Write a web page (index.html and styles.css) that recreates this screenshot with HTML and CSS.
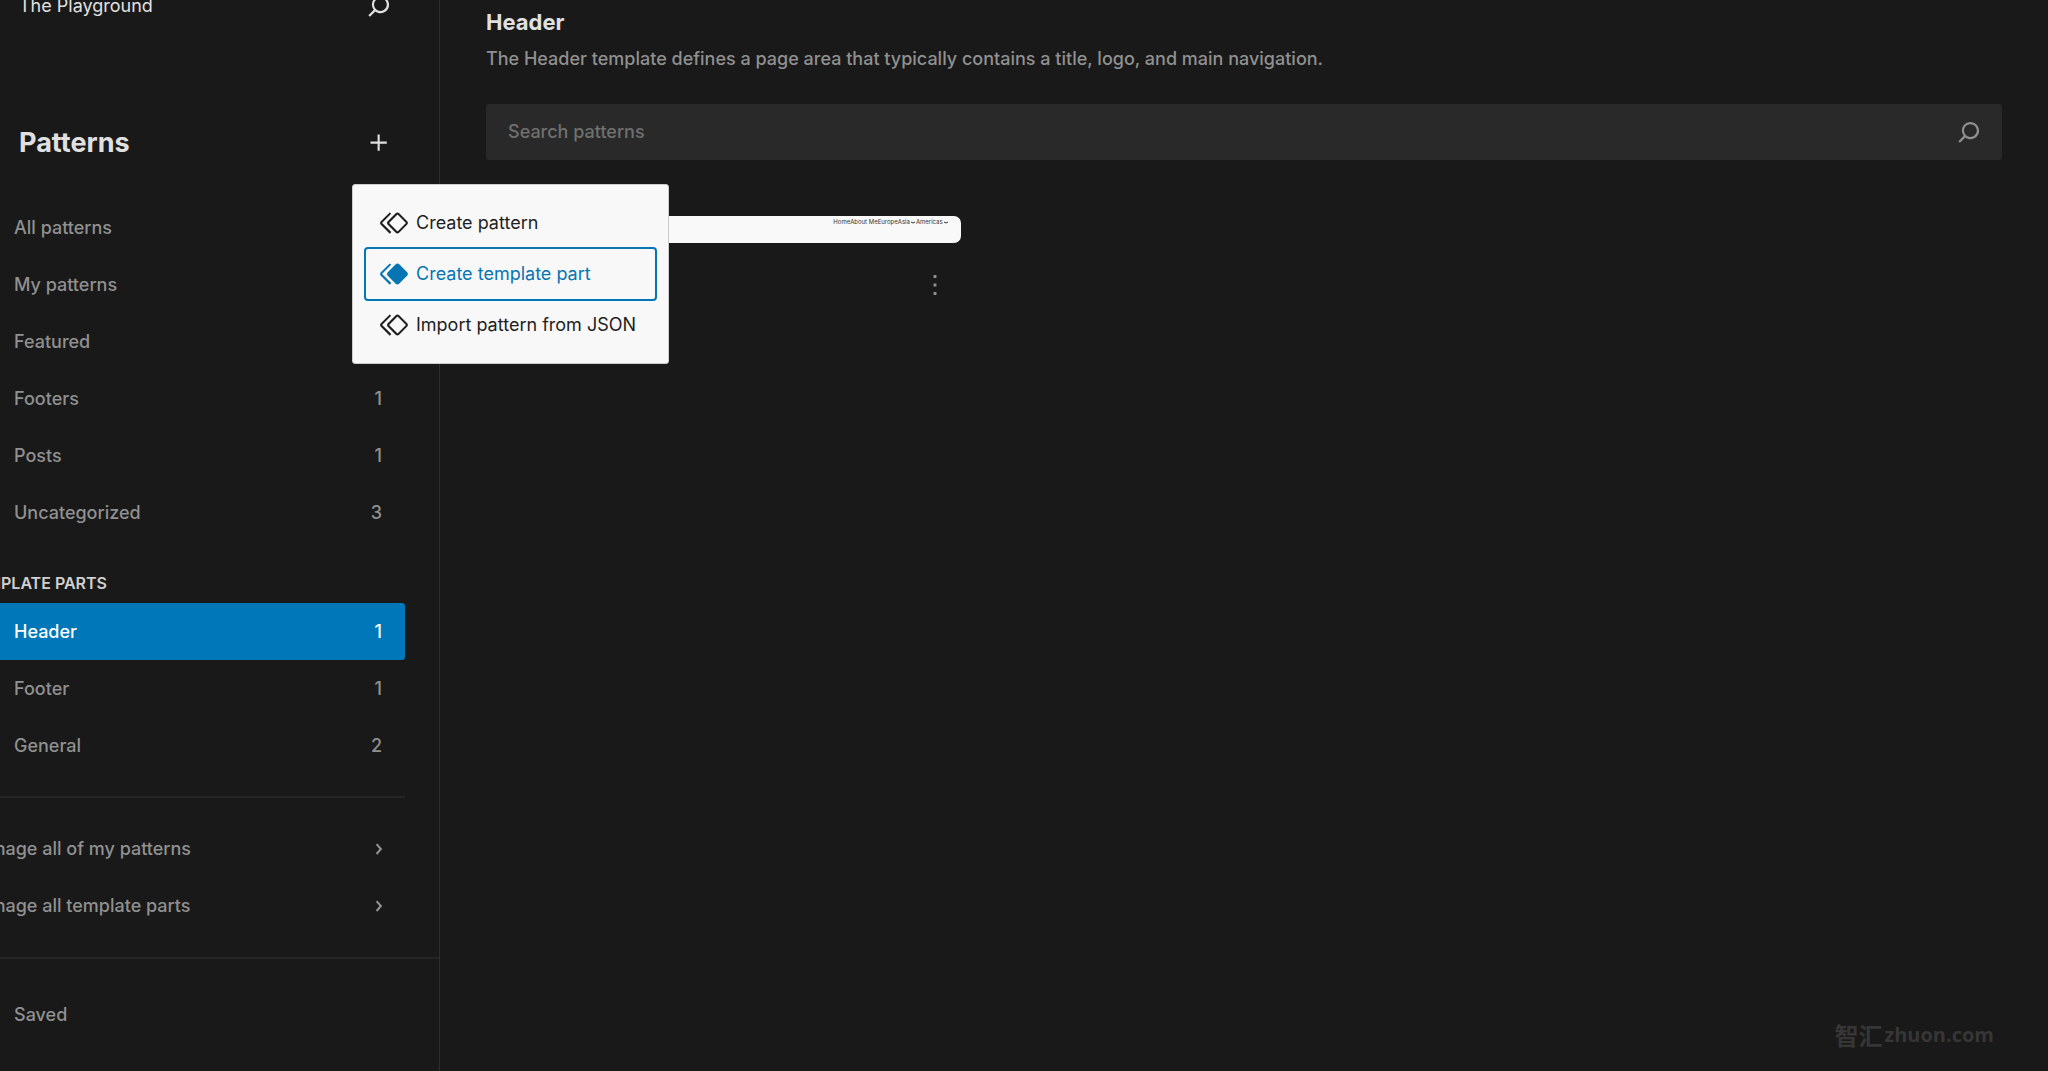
FILE: index.html
```html
<!DOCTYPE html>
<html lang="en">
<head>
<meta charset="utf-8">
<title>Patterns</title>
<link rel="stylesheet" href="styles.css">
</head>
<body>
<svg class="sprite" aria-hidden="true">
  <symbol id="search" viewBox="0 0 24 24"><path d="M13 5c-3.3 0-6 2.7-6 6 0 1.4.5 2.7 1.3 3.7l-3.8 3.8 1.1 1.1 3.8-3.8c1 .8 2.3 1.3 3.7 1.3 3.3 0 6-2.7 6-6S16.3 5 13 5zm0 10.5c-2.5 0-4.5-2-4.5-4.5s2-4.5 4.5-4.5 4.5 2 4.5 4.5-2 4.5-4.5 4.5z"/></symbol>
  <symbol id="plus" viewBox="0 0 24 24"><path d="M11 12.5V17.5H12.5V12.5H17.5V11H12.5V6H11V11H6V12.5H11Z"/></symbol>
  <symbol id="pattern" viewBox="0 0 24 24"><path d="M21.3 10.8l-5.6-5.6c-.7-.7-1.8-.7-2.5 0l-5.6 5.6c-.7.7-.7 1.8 0 2.5l5.6 5.6c.3.3.8.5 1.2.5s.9-.2 1.2-.5l5.6-5.6c.8-.7.8-1.9.1-2.5zm-1 1.4l-5.6 5.6c-.1.1-.3.1-.4 0l-5.6-5.6c-.1-.1-.1-.3 0-.4l5.6-5.6s.1-.1.2-.1.1 0 .2.1l5.6 5.6c.1.1.1.3 0 .4zm-16.6-.4L10 5.5l-1-1-6.3 6.3c-.7.7-.7 1.8 0 2.5L9 19.5l1.1-1.1-6.3-6.3c-.2 0-.2-.2-.1-.3z"/></symbol>
  <symbol id="part" viewBox="0 0 24 24"><path d="M21.3 10.8l-5.6-5.6c-.7-.7-1.8-.7-2.5 0l-5.6 5.6c-.7.7-.7 1.8 0 2.5l5.6 5.6c.3.3.8.5 1.2.5s.9-.2 1.2-.5l5.6-5.6c.8-.7.8-1.9.1-2.5zm-17.6 1L10 5.5l-1-1-6.3 6.3c-.7.7-.7 1.8 0 2.5L9 19.5l1.1-1.1-6.3-6.3c-.2 0-.2-.2-.1-.3z"/></symbol>
  <symbol id="chevron" viewBox="0 0 24 24"><path d="M10.8622 8.04053L14.2805 12.0286L10.8622 16.0167L9.72327 15.0405L12.3049 12.0286L9.72327 9.01672L10.8622 8.04053Z"/></symbol>
  <symbol id="more" viewBox="0 0 24 24"><path d="M13 19h-2v-2h2v2zm0-6h-2v-2h2v2zm0-6h-2V5h2v2z"/></symbol>
  <symbol id="caret" viewBox="0 0 6 6"><path d="M1 3l2 1 2-1" fill="none" stroke="currentColor"/></symbol>
</svg>
<div class="layout">
  <aside class="sidebar">
    <header class="site">
      <a class="site-name" href="#">The Playground</a>
      <button class="icon-button" aria-label="Search"><svg class="icon"><use href="#search"/></svg></button>
    </header>
    <div class="title-bar">
      <h1 class="title">Patterns</h1>
      <div class="creator">
        <button class="icon-button" aria-label="Create pattern" aria-expanded="true"><svg class="icon"><use href="#plus"/></svg></button>
        <div class="menu" role="menu">
          <button class="menu-item" role="menuitem"><svg class="icon"><use href="#pattern"/></svg>Create pattern</button>
          <button class="menu-item focused" role="menuitem"><svg class="icon"><use href="#part"/></svg>Create template part</button>
          <button class="menu-item" role="menuitem"><svg class="icon"><use href="#pattern"/></svg>Import pattern from JSON</button>
        </div>
      </div>
    </div>
    <nav class="nav">
      <div class="group">
        <a class="row" href="#">All patterns</a>
        <a class="row" href="#">My patterns</a>
        <a class="row" href="#">Featured</a>
        <a class="row" href="#">Footers<span>1</span></a>
        <a class="row" href="#">Posts<span>1</span></a>
        <a class="row" href="#">Uncategorized<span>3</span></a>
      </div>
      <h2 class="group-title">Template parts</h2>
      <div class="group">
        <a class="row current" href="#">Header<span>1</span></a>
        <a class="row" href="#">Footer<span>1</span></a>
        <a class="row" href="#">General<span>2</span></a>
      </div>
      <div class="group manage">
        <a class="row" href="#">Manage all of my patterns<svg class="icon"><use href="#chevron"/></svg></a>
        <a class="row" href="#">Manage all template parts<svg class="icon"><use href="#chevron"/></svg></a>
      </div>
    </nav>
    <footer class="status"><button class="saved">Saved</button></footer>
  </aside>
  <main class="content">
    <h2 class="heading">Header</h2>
    <p class="description">The Header template defines a page area that typically contains a title, logo, and main navigation.</p>
    <label class="search">
      <input class="search-input" type="search" placeholder="Search patterns" aria-label="Search patterns">
      <svg class="icon"><use href="#search"/></svg>
    </label>
    <div class="grid">
      <article class="card">
        <div class="preview">
          <span>Home</span><span>About Me</span><span>Europe</span><span>Asia</span><svg class="caret"><use href="#caret"/></svg><span>Americas</span><svg class="caret"><use href="#caret"/></svg>
        </div>
        <button class="icon-button" aria-label="Actions"><svg class="icon"><use href="#more"/></svg></button>
      </article>
    </div>
    <div class="watermark"><span class="watermark-name">智汇</span>zhuon.com</div>
  </main>
</div>
</body>
</html>
```
FILE: styles.css
```css
* {
  box-sizing: border-box;
}

body {
  margin: 0;
  background: #191919;
  color: #909090;
  font: 500 18px/24px Inter, "Noto Sans CJK SC", sans-serif;
}

h1,
h2,
p {
  margin: 0;
}

a {
  color: inherit;
  text-decoration: none;
}

button {
  padding: 0;
  border: 0;
  background: none;
  color: inherit;
  font: inherit;
}

.sprite {
  position: absolute;
  width: 0;
  height: 0;
}

.icon {
  display: block;
  flex: none;
  width: 34px;
  height: 34px;
  fill: currentColor;
}

.icon-button {
  display: block;
}

.layout {
  display: grid;
  grid-template-columns: 440px minmax(0, 1fr);
  min-height: 100vh;
}

.sidebar {
  display: flex;
  flex-direction: column;
  margin: -11px 0 0 -48px;
  border-right: 1px solid #2d2d2d;
}

.site,
.title-bar {
  display: flex;
  align-items: center;
  justify-content: space-between;
  padding: 0 43px 0 67px;
  color: #e0e0e0;
}

.site {
  height: 34px;
}

.site-name {
  font-weight: 400;
}

.title-bar {
  height: 56px;
  margin: 92px 0 28px;
}

.title {
  font-size: 27px;
  line-height: 36px;
  font-weight: 700;
}

.creator {
  position: relative;
}

.menu {
  position: absolute;
  z-index: 1;
  top: 58px;
  left: -10px;
  width: 317px;
  padding: 14px 11px;
  border: 1px solid #ccc;
  border-radius: 3px;
  background: #f8f8f8;
  color: #1e1e1e;
}

.menu-item {
  display: flex;
  align-items: center;
  gap: 5px;
  width: 100%;
  height: 48px;
  padding: 0 11px;
  border: 2px solid transparent;
  border-radius: 4px;
  font-weight: 400;
  white-space: nowrap;
}

.menu-item.focused {
  height: 54px;
  border-color: #0675b3;
  color: #0675b3;
}

.nav {
  flex: 1;
  padding-right: 34px;
}

.row {
  display: flex;
  align-items: center;
  justify-content: space-between;
  height: 57px;
  padding: 0 23px 0 62px;
}

.row.current {
  border-radius: 3px;
  background: #0077b8;
  color: #fff;
}

.group-title {
  padding: 30px 0 8px 14px;
  color: #d0d0d0;
  font-size: 16px;
  line-height: 24px;
  font-weight: 600;
  text-transform: uppercase;
}

.manage {
  margin-top: 22px;
  padding: 22px 0;
  border-top: 2px solid #252525;
}

.manage .row {
  padding: 0 9px 0 16px;
}

.status {
  display: flex;
  align-items: center;
  height: 114px;
  padding-left: 62px;
  border-top: 2px solid #252525;
}

.content {
  display: flex;
  flex-direction: column;
  padding: 8px 46px 20px;
}

.heading {
  color: #e0e0e0;
  font-size: 22px;
  line-height: 28px;
  font-weight: 700;
}

.description {
  margin: 11px 0 33px;
}

.search {
  display: flex;
  align-items: center;
  height: 56px;
  padding: 0 16px 0 22px;
  border-radius: 3px;
  background: #292929;
}

.search-input {
  flex: 1;
  min-width: 0;
  padding: 0;
  border: 0;
  outline: 0;
  background: none;
  color: #e0e0e0;
  font: inherit;
}

.search-input::placeholder {
  color: #707070;
  opacity: 1;
}

.grid {
  display: grid;
  grid-template-columns: repeat(3, minmax(0, 1fr));
  gap: 46px;
  flex: 1;
  align-content: start;
  padding-top: 56px;
}

.card {
  display: flex;
  flex-direction: column;
  align-items: flex-end;
  gap: 25px;
}

.card .icon-button {
  margin-right: 9px;
}

.preview {
  display: flex;
  justify-content: flex-end;
  width: 100%;
  height: 27px;
  padding: 2px 12px;
  border-radius: 7px;
  background: #f9f9f9;
  color: #333;
  font-size: 6px;
  line-height: 8px;
  font-weight: 400;
}

.caret {
  width: 6px;
  height: 8px;
}

.watermark {
  display: flex;
  align-items: center;
  align-self: flex-end;
  gap: 2px;
  margin-right: 8px;
  color: #363636;
  font: bold 20px/32px "Open Sans", sans-serif;
}

.watermark-name {
  font-family: "Noto Sans CJK SC", sans-serif;
  font-size: 24px;
}
```
